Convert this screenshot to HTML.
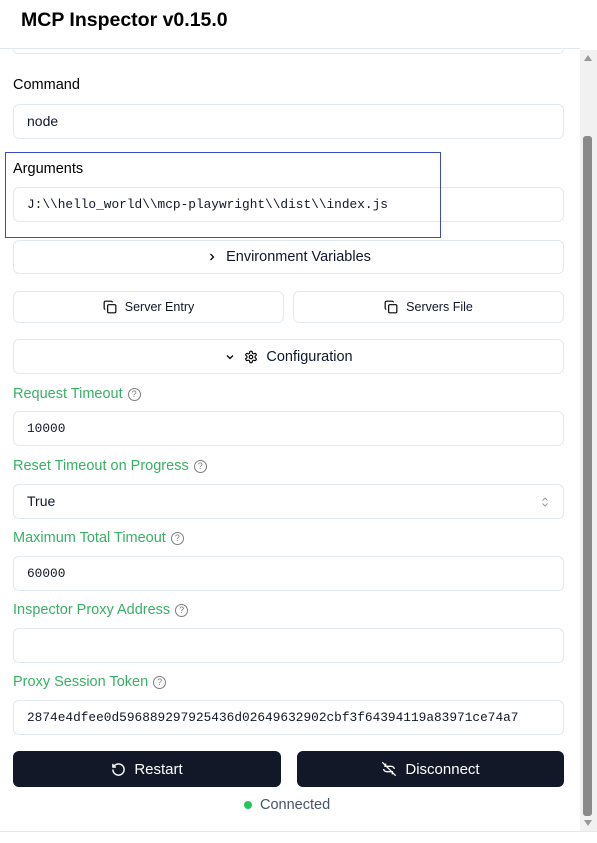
<!DOCTYPE html>
<html><head><meta charset="utf-8"><style>
*{box-sizing:border-box;margin:0;padding:0}
body{width:597px;height:843px;overflow:hidden;background:#fff;font-family:"Liberation Sans",sans-serif;position:relative;color:#0f172a}
.a{position:absolute}
.h1{left:21px;top:9px;font-size:19.5px;font-weight:bold;color:#000}
.inp{position:absolute;left:13px;width:551px;height:35px;border:1px solid #e2e8f0;border-radius:6px;font-size:14px;padding-left:13px;line-height:33px;background:#fff}
.mono{font-family:"Liberation Mono","DejaVu Sans Mono",monospace;font-size:12.8px}
.lbl{position:absolute;left:13px;font-size:14.5px;color:#000}
.g{color:#16a34a;opacity:.85}
.q{display:inline-block;width:13px;height:13px;border:1.2px solid #666;border-radius:50%;font-size:9px;line-height:11px;text-align:center;color:#666;vertical-align:1px;margin-left:5px}
.btn{position:absolute;border:1px solid #e2e8f0;border-radius:6px;display:flex;align-items:center;justify-content:center;font-size:14.5px;gap:8px;background:#fff}
.dk{background:#121828;color:#fff;border:none;font-size:15px}
</style></head><body>
<div class="a h1">MCP Inspector v0.15.0</div>
<div class="a" style="left:0;top:48px;width:580px;border-top:1px solid #e2e8f0"></div>
<div class="a" style="left:13px;top:49px;width:551px;height:5px;border:1px solid #e2e8f0;border-radius:0 0 6px 6px;border-top:none"></div>
<div class="a" style="left:580px;top:50px;width:17px;height:781px;background:#f1f1f1"></div>
<div class="a" style="left:583px;top:136px;width:9px;height:680px;background:#8a8a8a;border-radius:3px"></div>
<div class="a" style="left:584px;top:55px;width:0;height:0;border-left:4px solid transparent;border-right:4px solid transparent;border-bottom:6px solid #999"></div>
<div class="a" style="left:584px;top:820px;width:0;height:0;border-left:4px solid transparent;border-right:4px solid transparent;border-top:6px solid #999"></div>
<div class="a" style="left:0;top:831px;width:597px;border-top:1px solid #e2e8f0"></div>

<div class="lbl" style="top:77px">Command</div>
<div class="inp" style="top:104px">node</div>
<div class="lbl" style="top:161px">Arguments</div>
<div class="inp mono" style="top:187px">J:\\hello_world\\mcp-playwright\\dist\\index.js</div>
<div class="a" style="left:5px;top:152px;width:436px;height:86px;border:1.5px solid #3b4cca"></div>
<div class="btn" style="left:13px;top:240px;width:551px;height:34px"><svg width="12" height="12" viewBox="0 0 24 24" fill="none" stroke="#000" stroke-width="2.5"><path d="M9 6l6 6-6 6"/></svg>Environment Variables</div>
<div class="btn" style="left:13px;top:291px;width:271px;height:32px;font-size:12.5px"><svg width="14" height="14" viewBox="0 0 24 24" fill="none" stroke="#000" stroke-width="2"><rect x="8" y="8" width="14" height="14" rx="2"/><path d="M4 16c-1 0-2-1-2-2V4c0-1 1-2 2-2h10c1 0 2 1 2 2"/></svg>Server Entry</div>
<div class="btn" style="left:293px;top:291px;width:271px;height:32px;font-size:12.5px"><svg width="14" height="14" viewBox="0 0 24 24" fill="none" stroke="#000" stroke-width="2"><rect x="8" y="8" width="14" height="14" rx="2"/><path d="M4 16c-1 0-2-1-2-2V4c0-1 1-2 2-2h10c1 0 2 1 2 2"/></svg>Servers File</div>
<div class="btn" style="left:13px;top:339px;width:551px;height:35px"><svg width="12" height="12" viewBox="0 0 24 24" fill="none" stroke="#000" stroke-width="2.5"><path d="M6 9l6 6 6-6"/></svg><svg width="14" height="14" viewBox="0 0 24 24" fill="none" stroke="#000" stroke-width="2"><circle cx="12" cy="12" r="3"/><path d="M12.2 2h-.4a2 2 0 0 0-2 2v.2a2 2 0 0 1-1 1.7l-.4.3a2 2 0 0 1-2 0l-.2-.1a2 2 0 0 0-2.7.7l-.2.4a2 2 0 0 0 .7 2.7l.2.1a2 2 0 0 1 1 1.7v.5a2 2 0 0 1-1 1.7l-.2.1a2 2 0 0 0-.7 2.7l.2.4a2 2 0 0 0 2.7.7l.2-.1a2 2 0 0 1 2 0l.4.3a2 2 0 0 1 1 1.7v.2a2 2 0 0 0 2 2h.4a2 2 0 0 0 2-2v-.2a2 2 0 0 1 1-1.7l.4-.3a2 2 0 0 1 2 0l.2.1a2 2 0 0 0 2.7-.7l.2-.4a2 2 0 0 0-.7-2.7l-.2-.1a2 2 0 0 1-1-1.7v-.5a2 2 0 0 1 1-1.7l.2-.1a2 2 0 0 0 .7-2.7l-.2-.4a2 2 0 0 0-2.7-.7l-.2.1a2 2 0 0 1-2 0l-.4-.3a2 2 0 0 1-1-1.7V4a2 2 0 0 0-2-2z"/></svg>Configuration</div>

<div class="lbl g" style="top:386px">Request Timeout<span class="q">?</span></div>
<div class="inp mono" style="top:411px">10000</div>
<div class="lbl g" style="top:458px">Reset Timeout on Progress<span class="q">?</span></div>
<div class="inp" style="top:484px">True<svg style="position:absolute;right:14px;top:12px" width="8" height="10" viewBox="0 0 8 10" fill="none" stroke="#999" stroke-width="1"><path d="M1.5 3.5L4 1l2.5 2.5M1.5 6.5L4 9l2.5-2.5"/></svg></div>
<div class="lbl g" style="top:530px">Maximum Total Timeout<span class="q">?</span></div>
<div class="inp mono" style="top:556px">60000</div>
<div class="lbl g" style="top:602px">Inspector Proxy Address<span class="q">?</span></div>
<div class="inp" style="top:628px"></div>
<div class="lbl g" style="top:674px">Proxy Session Token<span class="q">?</span></div>
<div class="inp mono" style="top:700px">2874e4dfee0d596889297925436d02649632902cbf3f64394119a83971ce74a7</div>

<div class="btn dk" style="left:13px;top:751px;width:268px;height:36px"><svg width="15" height="15" viewBox="0 0 24 24" fill="none" stroke="#fff" stroke-width="2.2"><path d="M3 12a9 9 0 1 0 9-9 9.75 9.75 0 0 0-6.74 2.74L3 8"/><path d="M3 3v5h5"/></svg>Restart</div>
<div class="btn dk" style="left:297px;top:751px;width:267px;height:36px"><svg width="16" height="16" viewBox="0 0 24 24" fill="none" stroke="#fff" stroke-width="2"><path d="M2 2l20 20M5 8h10M18 16H9M7 4v4M17 16v4M4 12c0 2 2 4 5 4M20 12c0-2-2-4-5-4"/></svg>Disconnect</div>
<div class="a" style="left:244px;top:801px;width:8px;height:8px;border-radius:50%;background:#22c55e"></div>
<div class="a" style="left:260px;top:797px;font-size:14.5px;color:#475569">Connected</div>
</body></html>
